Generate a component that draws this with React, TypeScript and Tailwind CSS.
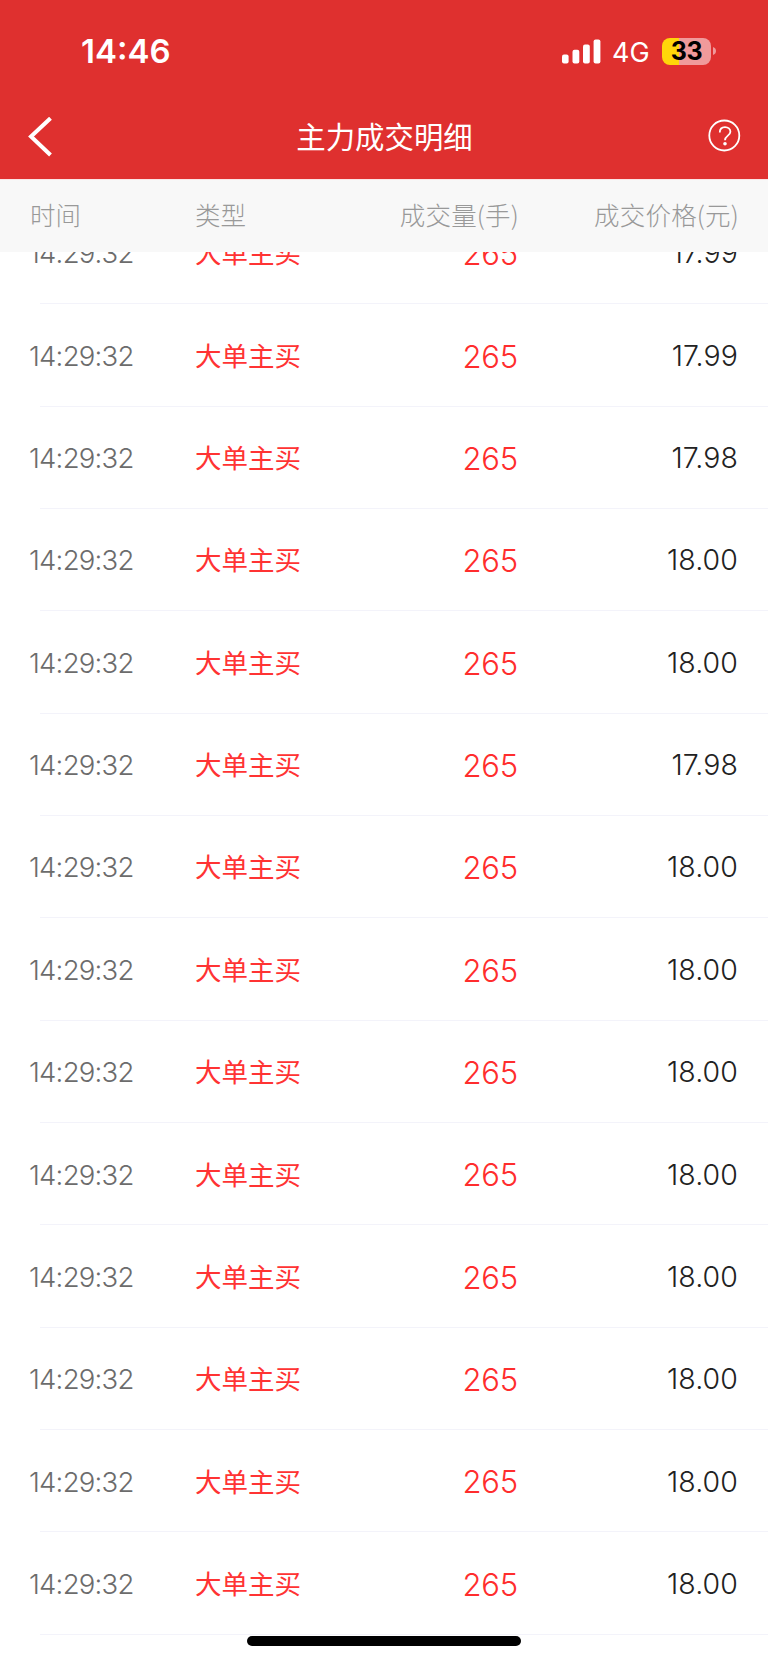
import React from 'react'

const prices = [
  '17.99', '17.99', '17.98', '18.00', '18.00', '17.98', '18.00',
  '18.00', '18.00', '18.00', '18.00', '18.00', '18.00', '18.00',
]

const trades = prices.map((price) => ({
  time: '14:29:32',
  type: '大单主买',
  volume: '265',
  price,
}))

const StatusBar = () => (
  <div className="flex h-[102px] items-center justify-between pl-[81px] pr-[52px]">
    <span className="pt-[1px] text-[33px] font-semibold leading-none">14:46</span>
    <div className="flex items-center">
      <svg width="39" height="25" viewBox="0 0 39 25" fill="currentColor">
        <rect x="0" y="15.5" width="6.6" height="9" rx="2" />
        <rect x="10.5" y="10.8" width="6.8" height="13.7" rx="2" />
        <rect x="21" y="5.6" width="6.8" height="18.9" rx="2" />
        <rect x="31.6" y="0.4" width="6.8" height="24.1" rx="2" />
      </svg>
      <span className="ml-[11px] w-[38px] pt-[2px] text-[27px] leading-none">4G</span>
      <div className="ml-[12px] flex h-[27px] w-[49px] items-center justify-center rounded-[8px] bg-[linear-gradient(90deg,#ffd60a_0_17px,#f09a9b_17px)] pt-[1px] text-[25px] font-bold leading-none tracking-[-0.3px] text-black">
        33
      </div>
      <svg className="ml-[2px]" width="3" height="8" viewBox="0 0 3 8" fill="#f09a9b">
        <path d="M0 0C2 .7 3 2.2 3 4S2 7.3 0 8Z" />
      </svg>
    </div>
  </div>
)

const TitleBar = () => (
  <div className="flex h-[77px] items-start justify-between pl-[28px] pr-[27px]">
    <svg className="mt-[15px]" width="33" height="40" viewBox="0 0 33 40" fill="none" stroke="currentColor" strokeWidth="4">
      <path d="M22.5 1.2L3 19.5L22.5 38" />
    </svg>
    <h1 className="mt-[14px] text-[29.4px] font-normal leading-[44px]">主力成交明细</h1>
    <svg className="mt-[17px]" width="33" height="33" viewBox="0 0 33 33" fill="none" stroke="currentColor" strokeWidth="1.8">
      <circle cx="16.3" cy="16.5" r="15" />
      <path d="M11.8 13.5C11.8 10 13.9 8.1 17 8.1C20.2 8.1 22.400 10 22.400 12.800C22.400 16.700 17 16.600 17 21.200" />
      <circle cx="17" cy="24.8" r="1.8" fill="currentColor" stroke="none" />
    </svg>
  </div>
)

const App = () => {
  return (
    <div className="relative flex h-[1663px] w-[768px] flex-col overflow-hidden bg-white font-['Inter','Noto_Sans_CJK_SC',sans-serif]">
      <header className="h-[179px] shrink-0 bg-[#df302f] text-white">
        <StatusBar />
        <TitleBar />
      </header>
      <div className="grid h-[73px] shrink-0 grid-cols-[165px_160px_164px_1fr] items-center border-t border-[#fbe4e4] bg-[#f8f8f8] pb-[4px] pl-[30px] pr-[29px] font-['Noto_Sans_CJK_SC',sans-serif] text-[25.5px] font-light text-[#999999]">
        <span>时间</span>
        <span>类型</span>
        <span className="text-right tracking-[0.2px]">成交量(手)</span>
        <span className="text-right tracking-[0.2px]">成交价格(元)</span>
      </div>
      <div className="flex min-h-0 flex-1 flex-col overflow-hidden">
        <div className="-mt-[50px]">
          {trades.map((trade, i) => (
            <div key={i} className="flex h-[102.35px] flex-col">
              <div className="grid flex-1 grid-cols-[166px_160px_163px_1fr] items-center pl-[29px] pr-[30px] pt-[2px] leading-none">
                <span className="pt-[1px] text-[27.5px] font-light tracking-[-0.75px] text-[#6c6c6c]">{trade.time}</span>
                <span className="text-[26.5px] font-normal text-[#ff3333]">{trade.type}</span>
                <span className="text-right text-[31px] font-light tracking-[-0.2px] text-[#ff2d2d]">{trade.volume}</span>
                <span className="text-right text-[28.5px] font-light tracking-[0.1px] text-[#222222]">{trade.price}</span>
              </div>
              <div className="ml-[40px] h-px bg-[#f3f3fa]"></div>
            </div>
          ))}
        </div>
      </div>
      <div className="absolute bottom-[17px] left-[247px] h-[10px] w-[274px] rounded-full bg-black"></div>
    </div>
  )
}

export default App
